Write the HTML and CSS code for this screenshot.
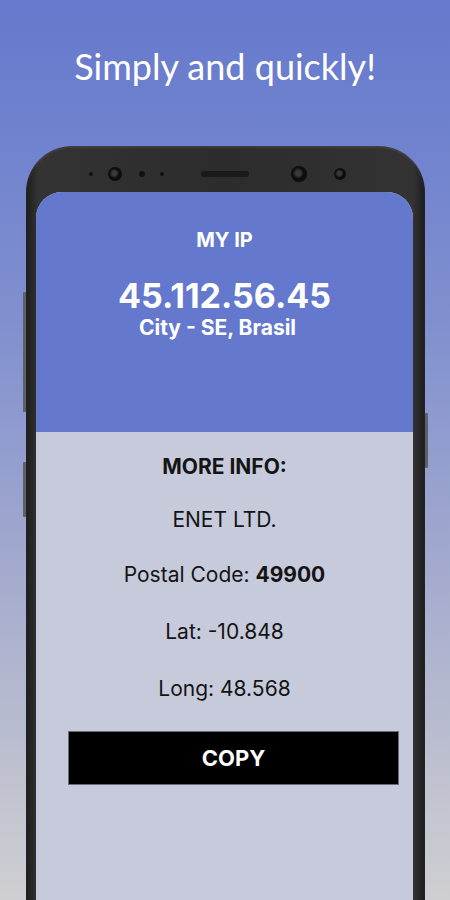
FILE: index.html
```html
<!DOCTYPE html>
<html>

<head>
	<title>My IP</title>
	<link rel="stylesheet" href="styles.css">
</head>

<body>
	<h1 class="headline">Simply and quickly!</h1>

	<div class="phone">
		<span class="side-btn left-top"></span>
		<span class="side-btn left-bottom"></span>
		<span class="side-btn right"></span>

		<div class="sensors">
			<span class="dot tiny"></span>
			<span class="cam big"></span>
			<span class="dot small"></span>
			<span class="dot tiny last"></span>
			<span class="speaker"></span>
			<span class="cam big front"></span>
			<span class="cam mid"></span>
		</div>

		<div class="screen">
			<div class="ip-panel">
				<p class="ip-label">MY IP</p>
				<p class="ip-value">45.112.56.45</p>
				<p class="ip-city">City - SE, Brasil</p>
			</div>

			<div class="info-panel">
				<p class="info-title">MORE INFO:</p>
				<p class="info-row first">ENET LTD.</p>
				<p class="info-row second">Postal Code: <b>49900</b></p>
				<p class="info-row">Lat: -10.848</p>
				<p class="info-row">Long: 48.568</p>
				<button class="copy-btn" type="button">COPY</button>
			</div>
		</div>
	</div>
</body>

</html>
```

FILE: styles.css
```css
html,
body {
	height: 100%;
}

body {
	margin: 0;
	padding: 0;
	overflow: hidden;
	background: linear-gradient(#6579cd 0%, #7f8fcf 35%, #a6acce 65%, #cfcfd1 100%);
	font-family: Inter, "Noto Sans", sans-serif;
}

.headline {
	margin: 0;
	padding-top: 46px;
	height: 146px;
	box-sizing: border-box;
	text-align: center;
	font-family: Lato, sans-serif;
	font-weight: 400;
	font-size: 36px;
	line-height: 40px;
	color: #fff;
}

.phone {
	position: relative;
	margin-left: 26px;
	width: 399px;
	height: 754px;
	box-sizing: border-box;
	padding: 0 12px 0 10px;
	background: linear-gradient(90deg, #1d1d1d, #333 3%, #2c2c2c 50%, #333 97%, #1d1d1d);
	border-radius: 46px 46px 0 0;
	box-shadow: inset 0 2px 2px rgba(255, 255, 255, 0.08);
}

.side-btn {
	position: absolute;
	width: 3px;
	background: #5d6066;
	border-radius: 1px;
}

.side-btn.left-top {
	left: -3px;
	top: 146px;
	height: 120px;
}

.side-btn.left-bottom {
	left: -3px;
	top: 316px;
	height: 55px;
}

.side-btn.right {
	right: -3px;
	top: 267px;
	height: 55px;
}

.sensors {
	height: 46px;
	display: flex;
	align-items: center;
	padding-left: 53px;
	padding-top: 10px;
	box-sizing: border-box;
}

.sensors span {
	display: block;
	border-radius: 50%;
	background: #111;
	flex-shrink: 0;
}

.dot.tiny {
	width: 4px;
	height: 4px;
	margin-right: 15px;
}

.dot.tiny.last {
	margin-right: 37px;
}

.dot.small {
	width: 6px;
	height: 6px;
	margin-right: 15px;
}

.cam.big {
	width: 14px;
	height: 14px;
	margin-right: 17px;
	background: radial-gradient(circle at 45% 45%, #3a3a3a 0 20%, #0d0d0d 45%);
}

.cam.big.front {
	width: 16px;
	height: 16px;
	margin-right: 27px;
}

.cam.mid {
	width: 12px;
	height: 12px;
	background: radial-gradient(circle at 45% 45%, #3a3a3a 0 20%, #0d0d0d 45%);
}

.sensors .speaker {
	width: 48px;
	height: 6px;
	border-radius: 3px;
	background: #1a1a1a;
	margin-right: 42px;
}

.screen {
	height: 708px;
	border-radius: 26px 26px 0 0;
	overflow: hidden;
	background: #c6cadb;
}

.ip-panel {
	height: 240px;
	box-sizing: border-box;
	padding-top: 36px;
	background: #6479cd;
	color: #fff;
	text-align: center;
}

.ip-panel p {
	margin: 0;
}

.ip-label {
	font-size: 20px;
	font-weight: 700;
	line-height: 24px;
}

.ip-panel .ip-value {
	margin-top: 24px;
	font-size: 34px;
	font-weight: 700;
	line-height: 40px;
}

.ip-city {
	font-size: 21px;
	font-weight: 700;
	line-height: 24px;
	padding-right: 14px;
}

.info-panel {
	padding-top: 23px;
	text-align: center;
	color: #141414;
}

.info-panel p {
	margin: 0;
}

.info-title {
	font-size: 21px;
	font-weight: 700;
	line-height: 24px;
}

.info-panel .info-row {
	margin-top: 33px;
	font-size: 21px;
	line-height: 24px;
}

.info-panel .info-row.first {
	margin-top: 29px;
}

.info-panel .info-row.second {
	margin-top: 31px;
}

.info-row b {
	font-weight: 700;
}

.copy-btn {
	display: block;
	width: 331px;
	height: 54px;
	margin: 30px 0 0 32px;
	background: #000;
	border: 1px solid #6a6d78;
	color: #fff;
	font-family: Inter, "Noto Sans", sans-serif;
	font-size: 22px;
	font-weight: 700;
	cursor: pointer;
}
```
